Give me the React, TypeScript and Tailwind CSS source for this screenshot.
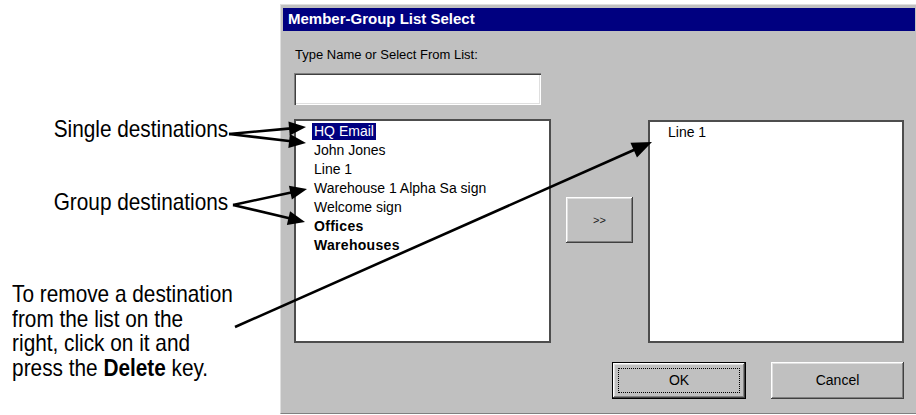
import React from 'react';

const raised =
    'shadow-[inset_-1px_-1px_0_#404040,inset_1px_1px_0_#ffffff,inset_-2px_-2px_0_#808080,inset_2px_2px_0_#dfdfdf]';

const leftItems = [
    { label: 'HQ Email', selected: true },
    { label: 'John Jones' },
    { label: 'Line 1' },
    { label: 'Warehouse 1 Alpha Sa sign' },
    { label: 'Welcome sign' },
    { label: 'Offices', bold: true },
    { label: 'Warehouses', bold: true },
];

// line with a filled arrow head at (x2, y2)
function Arrow({ x1, y1, x2, y2, len = 17, hw = 7 }: { x1: number; y1: number; x2: number; y2: number; len?: number; hw?: number }) {
    const dx = x2 - x1;
    const dy = y2 - y1;
    const d = Math.hypot(dx, dy);
    const ux = dx / d;
    const uy = dy / d;
    const bx = x2 - ux * len;
    const by = y2 - uy * len;
    const pts = `${x2},${y2} ${bx - uy * hw},${by + ux * hw} ${bx + uy * hw},${by - ux * hw}`;
    return (
        <g>
            <line x1={x1} y1={y1} x2={bx + ux * 2} y2={by + uy * 2} stroke="#000" strokeWidth={2.6} />
            <polygon points={pts} fill="#000" />
        </g>
    );
}

export default function App() {
    return (
        <div className="relative flex h-[415px] w-[916px] overflow-hidden bg-white">
            {/* callout texts (condensed face) */}
            <div className="w-[280px] shrink-0 pt-[117px] text-[24px] leading-[24px] text-black [font-family:'Liberation_Sans',Arial,sans-serif]">
                <div className="origin-left scale-x-[0.866] whitespace-nowrap pl-[62px]">Single destinations</div>
                <div className="mt-[49px] origin-left scale-x-[0.866] whitespace-nowrap pl-[62px]">Group destinations</div>
                <p className="mt-[68px] origin-left scale-x-[0.866] whitespace-nowrap pl-[14px] leading-[24.5px]">
                    To remove a destination
                    <br />
                    from the list on the
                    <br />
                    right, click on it and
                    <br />
                    press the <b>Delete</b> key.
                </p>
            </div>

            {/* dialog */}
            <div className="mt-[4px] flex h-[410px] w-[636px] shrink-0 flex-col border-l border-t border-b border-l-[#dfdfdf] border-t-[#dfdfdf] border-b-[#808080] bg-[#c0c0c0] pl-[2px] pt-[3px] pr-[1px] [font-family:'Liberation_Sans',Arial,sans-serif]">
                <div className="flex h-[23px] items-center bg-[#000080] pl-[5px] text-[15px] font-bold text-white">
                    Member-Group List Select
                </div>

                <div className="flex flex-col pl-[11px] pr-[11px] pt-[16px]">
                    <div className="pl-[1px] text-[13px] leading-[15px] text-black">Type Name or Select From List:</div>
                    <div className="mt-[11px] h-[32px] w-[247px] bg-white shadow-[inset_1px_1px_0_#808080,inset_2px_2px_0_#404040,inset_-1px_-1px_0_#ffffff,inset_-2px_-2px_0_#dfdfdf]" />

                    <div className="mt-[14px] flex gap-[15px]">
                        <div className="h-[224px] w-[257px] border-2 border-[#4d4d4d] bg-white pt-[1px] text-[14px] text-black">
                            {leftItems.map((it) => (
                                <div key={it.label} className="flex h-[19px] items-center pl-[16px]">
                                    <span
                                        className={
                                            'flex h-[17px] items-center px-[2px] ' +
                                            (it.selected ? 'bg-[#000080] text-white ' : '') +
                                            (it.bold ? 'font-bold tracking-[0.3px]' : '')
                                        }
                                    >
                                        {it.label}
                                    </span>
                                </div>
                            ))}
                        </div>

                        <div className="pt-[78px]">
                            <div className={'flex h-[46px] w-[67px] items-center justify-center bg-[#c0c0c0] text-[11px] text-[#202020] ' + raised}>
                                &gt;&gt;
                            </div>
                        </div>

                        <div className="mt-[1px] h-[223px] w-[256px] border-2 border-[#4d4d4d] bg-white pt-[1px] text-[14px] text-black">
                            <div className="flex h-[19px] items-center pl-[16px]">
                                <span className="px-[2px]">Line 1</span>
                            </div>
                        </div>
                    </div>

                    <div className="mt-[19px] flex justify-end gap-[25px] text-[14px] text-black">
                        <div className={'flex h-[37px] w-[134px] border border-black bg-[#c0c0c0] p-[5px] ' + raised}>
                            <div className="flex flex-1 items-center justify-center border border-dotted border-black">OK</div>
                        </div>
                        <div className={'flex h-[37px] w-[133px] items-center justify-center bg-[#c0c0c0] ' + raised}>Cancel</div>
                    </div>
                </div>
            </div>

            {/* callout arrows */}
            <svg className="pointer-events-none absolute inset-0" width={916} height={415}>
                <Arrow x1={229} y1={134} x2={306} y2={127} />
                <Arrow x1={229} y1={134} x2={306} y2={143} />
                <Arrow x1={233} y1={205} x2={307} y2={189} />
                <Arrow x1={233} y1={205} x2={305} y2={222} />
                <Arrow x1={235} y1={327} x2={652} y2={142} len={20} hw={8} />
            </svg>
        </div>
    );
}
